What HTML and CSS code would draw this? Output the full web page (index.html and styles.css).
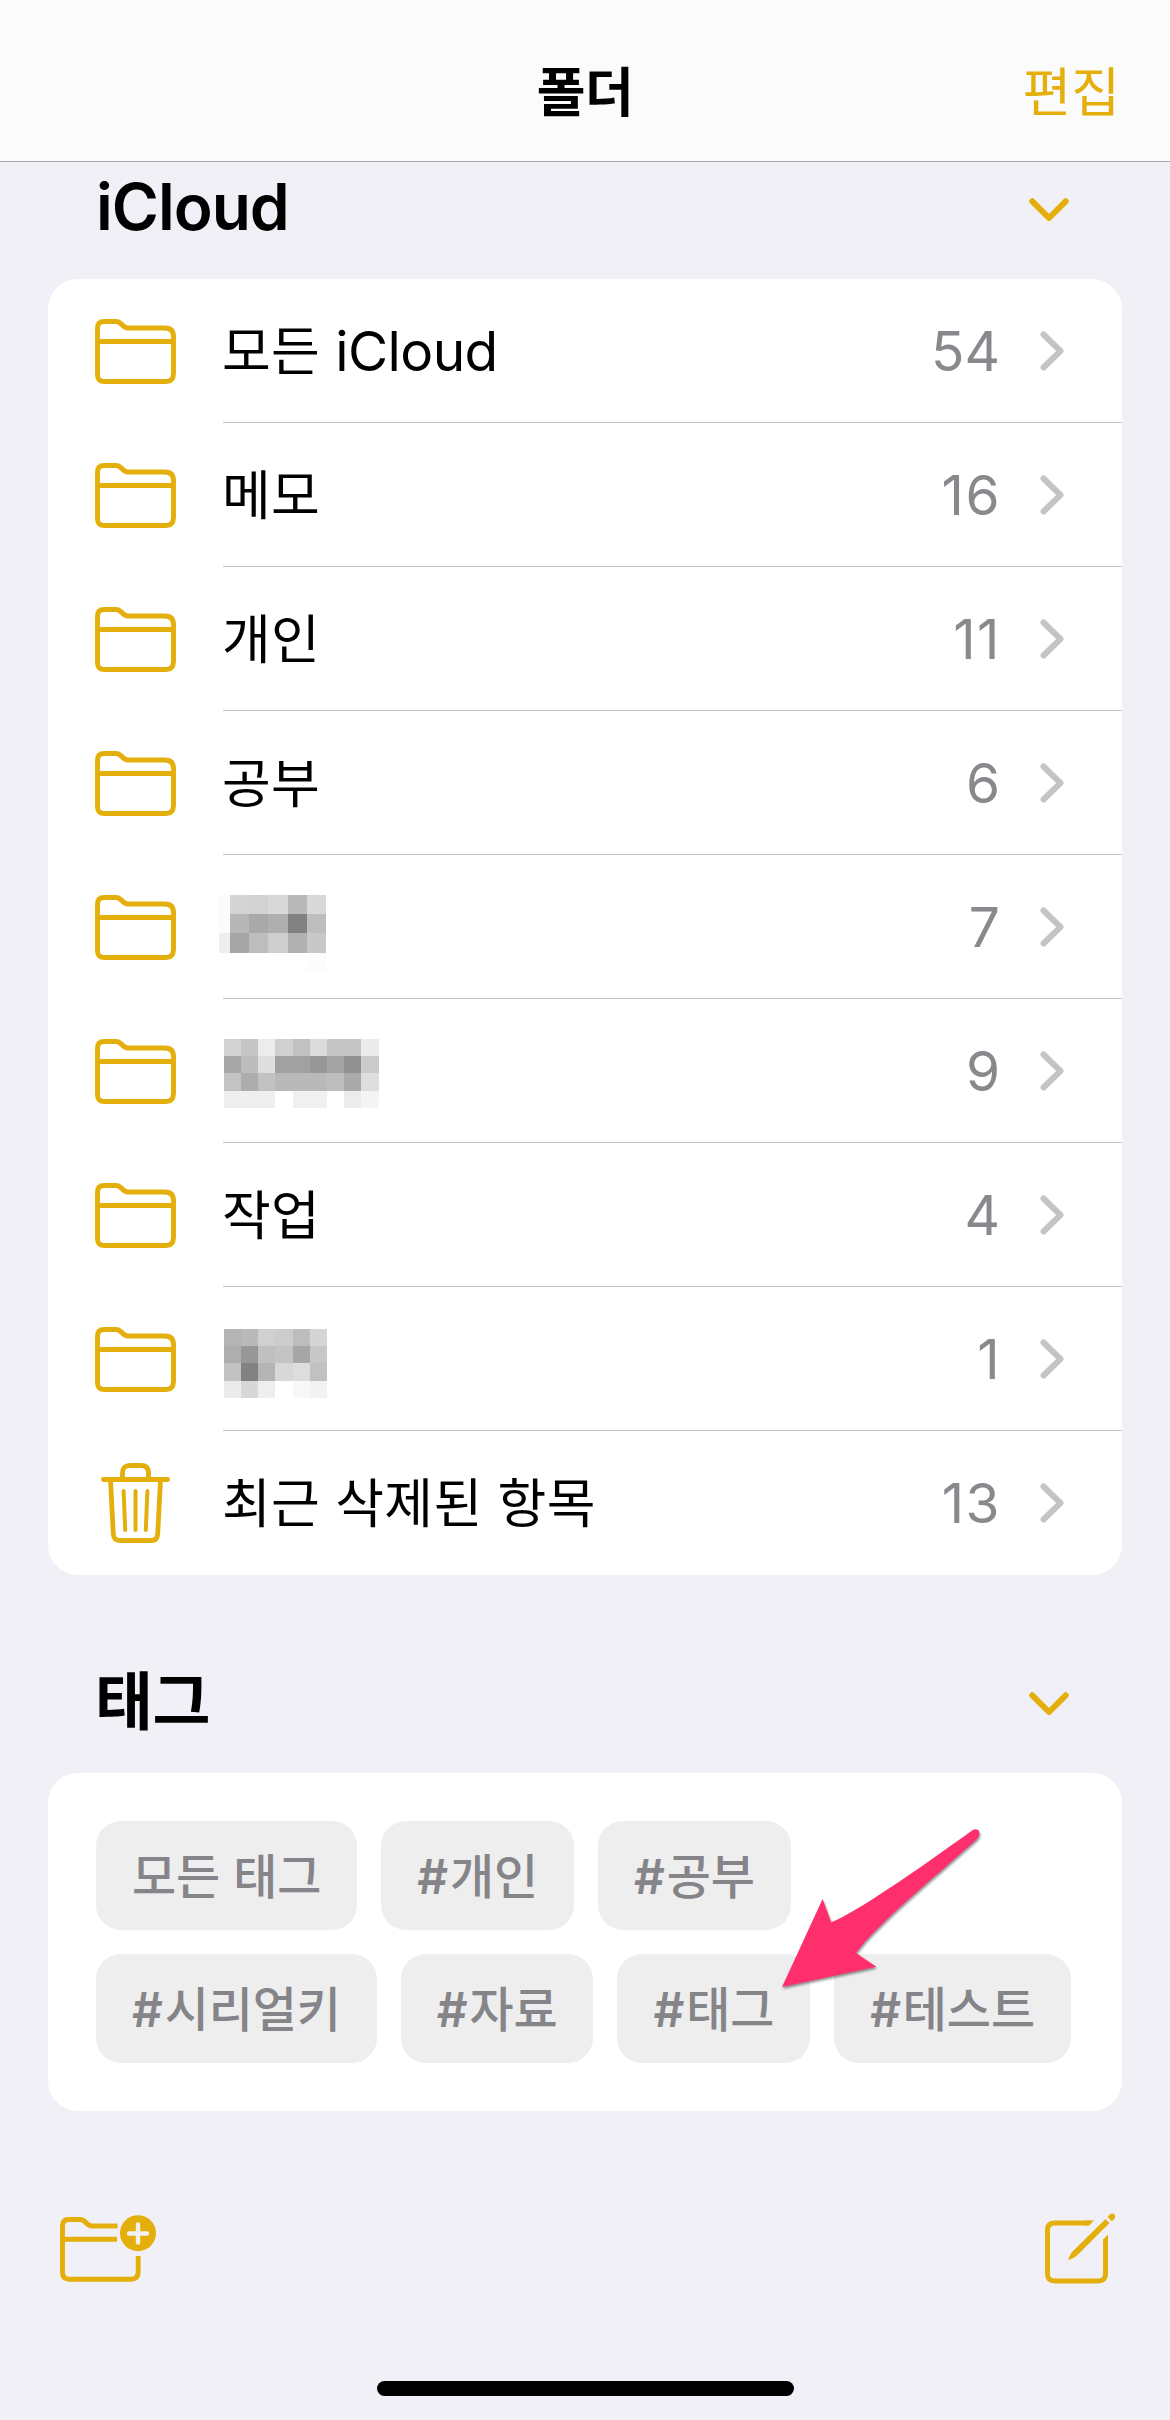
FILE: index.html
```html
<!DOCTYPE html>
<html lang="ko">
<head>
<meta charset="utf-8">
<title>폴더</title>
<link rel="stylesheet" href="styles.css">
</head>
<body>
<svg class="defs" aria-hidden="true">
  <symbol id="folder" viewBox="0 0 81 65">
    <path d="M2.5 56V9Q2.5 2.5 9 2.5H21C27 2.5 27 9 33 9H70Q78.500 9 78.500 17.500V54.500Q78.500 62.500 71 62.500H9.500Q2.500 62.500 2.500 56ZM2.500 22.500H78.500" fill="none" stroke="currentColor" stroke-width="4.900"/>
  </symbol>
  <symbol id="right" viewBox="0 0 24 40">
    <path d="M3.500 3.500L20.500 20L3.500 36.500" fill="none" stroke="currentColor" stroke-width="6" stroke-linecap="round" stroke-linejoin="round"/>
  </symbol>
  <symbol id="down" viewBox="0 0 40 24">
    <path d="M3.300 3.300L20 20L36.700 3.300" fill="none" stroke="currentColor" stroke-width="6" stroke-linecap="round" stroke-linejoin="round"/>
  </symbol>
</svg>

<header class="navbar">
  <h1 class="title">폴더</h1>
  <a class="edit">편집</a>
</header>

<main class="content">
  <section>
    <div class="section-head">
      <h2 class="latin">iCloud</h2>
      <svg class="down"><use href="#down"/></svg>
    </div>
    <ul class="card list">
      <li class="row"><svg class="icon"><use href="#folder"/></svg><div class="cell"><span class="name">모든 <span class="latin">iCloud</span></span><span class="count">54</span><svg class="right"><use href="#right"/></svg></div></li>
      <li class="row"><svg class="icon"><use href="#folder"/></svg><div class="cell"><span class="name">메모</span><span class="count loose">16</span><svg class="right"><use href="#right"/></svg></div></li>
      <li class="row"><svg class="icon"><use href="#folder"/></svg><div class="cell"><span class="name">개인</span><span class="count loose">11</span><svg class="right"><use href="#right"/></svg></div></li>
      <li class="row"><svg class="icon"><use href="#folder"/></svg><div class="cell"><span class="name">공부</span><span class="count">6</span><svg class="right"><use href="#right"/></svg></div></li>
      <li class="row"><svg class="icon"><use href="#folder"/></svg><div class="cell">
        <svg class="mosaic" viewBox="-5 0 165 143" shape-rendering="crispEdges">
          <rect x="-4" y="40" width="11" height="38" fill="#fbfbf9"/><rect x="-4" y="78" width="11" height="20" fill="#efeeec"/>
          <g transform="translate(7 40) scale(19.200)">
            <path fill="#d5d5d5" d="M0 0h1v1h-1z"/><path fill="#d2d2d2" d="M1 0h1v1h-1z"/><path fill="#d8d8d8" d="M2 0h1v1h-1z"/><path fill="#b8b8b8" d="M3 0h1v1h-1z"/><path fill="#d8d8d8" d="M4 0h1v1h-1z"/>
            <path fill="#b7b7b7" d="M0 1h1v1h-1z"/><path fill="#a9a9a9" d="M1 1h1v1h-1z"/><path fill="#afafaf" d="M2 1h1v1h-1z"/><path fill="#828282" d="M3 1h1v1h-1z"/><path fill="#bebebe" d="M4 1h1v1h-1z"/>
            <path fill="#a5a5a5" d="M0 2h1v1h-1z"/><path fill="#bdbdbd" d="M1 2h1v1h-1z"/><path fill="#cecece" d="M2 2h1v1h-1z"/><path fill="#b0b0b0" d="M3 2h1v1h-1z"/><path fill="#c8c8c8" d="M4 2h1v1h-1z"/>
            <path fill="#fcfcfc" d="M4 3h1v1h-1z"/>
          </g>
        </svg>
        <span class="count">7</span><svg class="right"><use href="#right"/></svg></div></li>
      <li class="row"><svg class="icon"><use href="#folder"/></svg><div class="cell">
        <svg class="mosaic" viewBox="-5 0 165 143" shape-rendering="crispEdges">
          <g transform="translate(0.700 40) scale(17.200)">
            <path fill="#d2d2d2" d="M0 0h1v1h-1z"/><path fill="#c5c5c5" d="M1 0h1v1h-1z"/><path fill="#ececec" d="M2 0h1v1h-1z"/><path fill="#d0d0d0" d="M3 0h1v1h-1z"/><path fill="#c1c1c1" d="M4 0h1v1h-1z"/><path fill="#dbdbdb" d="M5 0h1v1h-1z"/><path fill="#c6c6c6" d="M6 0h2v1h-2z"/><path fill="#ebebeb" d="M8 0h1v1h-1z"/>
            <path fill="#a8a8a8" d="M0 1h1v1h-1z"/><path fill="#bcbcbc" d="M1 1h1v1h-1z"/><path fill="#dedede" d="M2 1h1v1h-1z"/><path fill="#a1a1a1" d="M3 1h2v1h-2z"/><path fill="#979797" d="M5 1h1v1h-1z"/><path fill="#a4a4a4" d="M6 1h1v1h-1z"/><path fill="#919191" d="M7 1h1v1h-1z"/><path fill="#cbcbcb" d="M8 1h1v1h-1z"/>
            <path fill="#c3c3c3" d="M0 2h1v1h-1z"/><path fill="#adadad" d="M1 2h1v1h-1z"/><path fill="#c2c2c2" d="M2 2h1v1h-1z"/><path fill="#b9b9b9" d="M3 2h3v1h-3z"/><path fill="#bebebe" d="M6 2h1v1h-1z"/><path fill="#aaaaaa" d="M7 2h1v1h-1z"/><path fill="#dedede" d="M8 2h1v1h-1z"/>
            <path fill="#efefef" d="M0 3h3v1h-3z"/><path fill="#f0f0f0" d="M4 3h2v1h-2z"/><path fill="#ececec" d="M7 3h1v1h-1z"/><path fill="#f4f4f4" d="M8 3h1v1h-1z"/>
          </g>
        </svg>
        <span class="count">9</span><svg class="right"><use href="#right"/></svg></div></li>
      <li class="row"><svg class="icon"><use href="#folder"/></svg><div class="cell"><span class="name">작업</span><span class="count">4</span><svg class="right"><use href="#right"/></svg></div></li>
      <li class="row"><svg class="icon"><use href="#folder"/></svg><div class="cell">
        <svg class="mosaic" viewBox="-5 0 165 143" shape-rendering="crispEdges">
          <g transform="translate(0.700 42) scale(17.200)">
            <path fill="#b4b4b4" d="M0 0h1v1h-1z"/><path fill="#b9b9b9" d="M1 0h1v1h-1z"/><path fill="#d0d0d0" d="M2 0h1v1h-1z"/><path fill="#cccccc" d="M3 0h1v1h-1z"/><path fill="#bdbdbd" d="M4 0h1v1h-1z"/><path fill="#d5d5d5" d="M5 0h1v1h-1z"/>
            <path fill="#aeaeae" d="M0 1h1v1h-1z"/><path fill="#979797" d="M1 1h1v1h-1z"/><path fill="#c0c0c0" d="M2 1h1v1h-1z"/><path fill="#c4c4c4" d="M3 1h1v1h-1z"/><path fill="#a6a6a6" d="M4 1h1v1h-1z"/><path fill="#c7c7c7" d="M5 1h1v1h-1z"/>
            <path fill="#c2c2c2" d="M0 2h1v1h-1z"/><path fill="#828282" d="M1 2h1v1h-1z"/><path fill="#b5b5b5" d="M2 2h1v1h-1z"/><path fill="#d8d8d8" d="M3 2h1v1h-1z"/><path fill="#dddddd" d="M4 2h1v1h-1z"/><path fill="#c1c1c1" d="M5 2h1v1h-1z"/>
            <path fill="#ebebeb" d="M0 3h1v1h-1z"/><path fill="#d7d7d7" d="M1 3h1v1h-1z"/><path fill="#eeeeee" d="M2 3h1v1h-1z"/><path fill="#f8f8f8" d="M4 3h1v1h-1z"/><path fill="#f2f2f2" d="M5 3h1v1h-1z"/>
          </g>
        </svg>
        <span class="count loose">1</span><svg class="right"><use href="#right"/></svg></div></li>
      <li class="row">
        <svg class="icon trash" viewBox="0 0 69 80" fill="none" stroke="currentColor" stroke-width="4.800" stroke-linecap="round">
          <path d="M2.400 16.500H66.600M21.500 16V10Q21.500 2.500 29 2.500H40Q47.500 2.500 47.500 10V16M9.500 17L12.300 71Q12.700 77.500 19 77.500H50.500Q56.300 77.500 56.700 71L59.500 17"/>
          <path stroke-width="4" d="M22.600 28L24.200 67M34.500 28V67M46.400 28L44.800 67"/>
        </svg>
        <div class="cell"><span class="name">최근 삭제된 항목</span><span class="count loose">13</span><svg class="right"><use href="#right"/></svg></div></li>
    </ul>
  </section>

  <section class="tags">
    <div class="section-head">
      <h2>태그</h2>
      <svg class="down"><use href="#down"/></svg>
    </div>
    <div class="card chips">
      <span class="chip">모든 태그</span>
      <span class="chip"><b>#</b>개인</span>
      <span class="chip"><b>#</b>공부</span>
      <span class="chip"><b>#</b>시리얼키</span>
      <span class="chip"><b>#</b>자료</span>
      <span class="chip"><b>#</b>태그</span>
      <span class="chip"><b>#</b>테스트</span>
      <svg class="arrow" viewBox="770 1815 225 190">
        <path d="M782 1987L822.600 1899L831.200 1922.300C855 1913 913 1873 972.500 1830.200Q976 1828 978.500 1830.500Q981 1834 977 1839C935 1877 878 1923 856 1953L876.300 1966.700Z"/>
      </svg>
    </div>
  </section>
</main>

<footer class="toolbar">
  <svg class="new-folder" viewBox="0 0 96 67" fill="none" stroke="currentColor" stroke-width="4.900">
    <path d="M57.500 11H32C26 11 26 4.500 20 4.500H9Q2.500 4.500 2.500 11V57.500Q2.500 64.200 9.500 64.200H71Q78.200 64.200 78.200 57V41M2.500 24.200H57"/>
    <circle cx="78" cy="18.200" r="18" fill="currentColor" stroke="none"/>
    <path class="plus" d="M69 18.500H87M78 9.500V27.500"/>
  </svg>
  <svg class="compose" viewBox="0 0 71 71" fill="none" stroke="currentColor" stroke-width="4.900">
    <path d="M44.500 10H10Q2.500 10 2.500 17V61Q2.500 68 10 68H53Q60.500 68 60.500 61V26"/>
    <path d="M49 7.500L44 12.500H40V7.500Z M63 21.500V30H58V26.500Z" fill="currentColor" stroke="none"/>
    <path fill="currentColor" stroke="none" d="M60.500 6L64.500 10L32 42.500Q30 44.500 24 46.800Q23 46.500 23.500 45.500Q25.500 40.500 27.500 38.500ZM62.500 4Q66.500 -1.200 69.500 1.500Q72 4.500 67 8.200Z"/>
  </svg>
</footer>
<div class="home-bar"></div>
</body>
</html>
```
FILE: styles.css
```css
* { box-sizing: border-box; }

body {
  margin: 0;
  width: 1170px;
  height: 2420px;
  display: flex;
  flex-direction: column;
  overflow: hidden;
  background: #f1f0f6;
  color: #000;
  font-family: "Noto Sans CJK KR", sans-serif;
}

h1, h2, ul { margin: 0; padding: 0; }
svg { display: block; flex: none; }
.defs { position: absolute; width: 0; height: 0; }
.latin, .count { font-family: Inter, sans-serif; }

.navbar {
  height: 162px;
  flex: none;
  display: grid;
  grid-template-columns: 1fr auto 1fr;
  align-items: center;
  padding: 17px 50px 0;
  background: #fbfbfc;
  border-bottom: 1px solid #a9a9ad;
}
.title { grid-column: 2; font-size: 53px; line-height: 60px; font-weight: 700; letter-spacing: -0.5px; }
.edit { justify-self: end; font-size: 53px; line-height: 60px; color: #e4af0a; }

.section-head {
  height: 117px;
  display: flex;
  align-items: flex-start;
  justify-content: space-between;
  padding: 6px 101px 0 95px;
}
.section-head h2 { font-size: 63px; line-height: 70px; font-weight: 700; letter-spacing: -0.5px; }
.section-head h2.latin { margin: 4px 0 0 1px; font-size: 64px; font-weight: 600; letter-spacing: -1px; }
.down { width: 40px; height: 24px; margin-top: 30px; color: #e4af0a; }
.tags { margin-top: 81px; }

.card { margin: 0 48px; border-radius: 30px; background: #fff; }
.list { list-style: none; overflow: hidden; }
.row { height: 144px; display: flex; align-items: center; padding-left: 47px; }
.icon { width: 81px; height: 65px; margin-right: 47px; color: #e4af0a; }
.trash { width: 69px; height: 80px; margin-left: 6px; margin-right: 53px; }
.cell {
  flex: 1;
  height: 144px;
  display: flex;
  align-items: center;
  padding-right: 58px;
  border-bottom: 1px solid #c5c5c8;
}
.row:last-child .cell { border-bottom: 0; }
.name { margin-left: -1px; padding-bottom: 6px; font-size: 53px; line-height: 70px; letter-spacing: 0.3px; }
.name .latin { font-size: 55px; line-height: 60px; letter-spacing: -0.6px; }
.count { margin-left: auto; margin-right: 40px; font-size: 55px; line-height: 70px; color: #88888d; }
.count.loose { margin-right: 39px; letter-spacing: 1.5px; }
.right { width: 24px; height: 40px; color: #c4c4c7; }
.mosaic { width: 165px; height: 143px; margin-left: -5px; }

.chips {
  position: relative;
  height: 338px;
  display: flex;
  flex-wrap: wrap;
  align-content: flex-start;
  gap: 24px;
  padding: 48px;
}
.chip {
  height: 109px;
  padding: 0 36px;
  border-radius: 25px;
  background: #eeeeee;
  color: #858489;
  font-size: 48px;
  font-weight: 500;
  line-height: 104px;
  letter-spacing: -0.15px;
  white-space: nowrap;
}
.chip b { display: inline-block; width: 32.7px; font-family: Inter, sans-serif; font-weight: 600; }
.arrow {
  position: absolute;
  left: 722px;
  top: 42px;
  width: 225px;
  height: 190px;
  fill: #ff2f6d;
  filter: drop-shadow(1px 2px 1px rgba(0, 0, 0, 0.4));
}

.toolbar {
  display: flex;
  justify-content: space-between;
  align-items: flex-start;
  margin-top: 102px;
  padding: 0 54px 0 60px;
  color: #e4af0a;
}
.new-folder { width: 96px; height: 67px; margin-top: 2px; }
.plus { stroke: #f1f0f6; stroke-width: 4.4; stroke-linecap: round; }
.compose { width: 71px; height: 71px; }
.home-bar { width: 417px; height: 15px; margin: 97px 0 0 377px; border-radius: 8px; background: #000; }
```
